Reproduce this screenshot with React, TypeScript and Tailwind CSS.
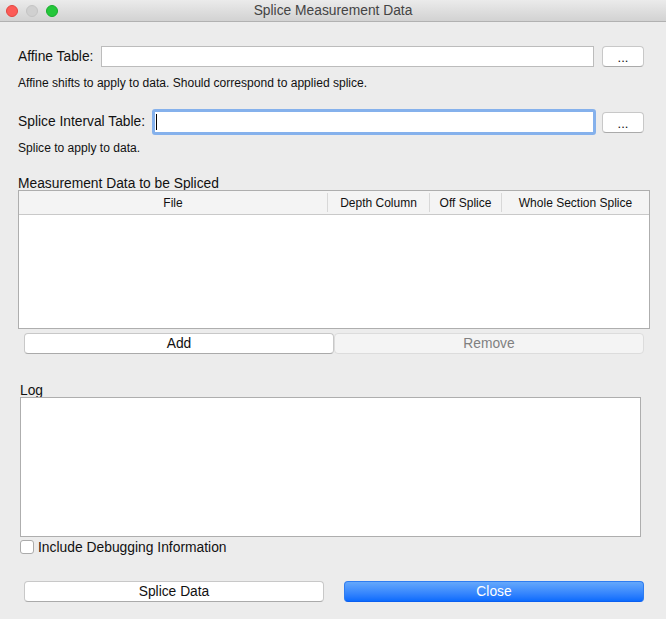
export default function App() {
  const font = { fontFamily: '"Liberation Sans", Arial, sans-serif' };
  return (
    <div style={font} className="flex h-[619px] w-[666px] flex-col overflow-hidden bg-[#ececec] text-[13.8px] text-[#111]">
      <header className="relative flex h-[22px] shrink-0 items-center justify-center border-b border-[#b1b1b1] bg-gradient-to-b from-[#ebebeb] to-[#d2d2d2]">
        <div className="absolute left-[6px] top-[5px] flex gap-[8px]">
          <span className="h-[12px] w-[12px] rounded-full border border-[#e2463f] bg-[#fc5b57]" />
          <span className="h-[12px] w-[12px] rounded-full border border-[#c4c4c4] bg-[#d0d0d0]" />
          <span className="h-[12px] w-[12px] rounded-full border border-[#17ad2d] bg-[#25c73b]" />
        </div>
        <span className="pt-[2px] text-[13.8px] text-[#444]">Splice Measurement Data</span>
      </header>

      <main className="flex flex-1 flex-col">
        <div className="ml-[18px] mt-[24px] flex h-[21px] items-center">
          <label className="w-[83px] pt-[1px]">Affine Table:</label>
          <div className="h-[21px] w-[493px] border border-[#bcbcbc] bg-white" />
          <button className="ml-[8px] flex h-[21px] w-[42px] items-center justify-center rounded-[4px] border border-[#c8c8c8] border-b-[#aaa] bg-white pt-[3px] text-[13px]">...</button>
        </div>
        <p className="ml-[18px] mt-[9px] h-[14px] text-[12.07px] leading-[14px]">Affine shifts to apply to data. Should correspond to applied splice.</p>

        <div className="ml-[18px] mt-[19px] flex h-[26px] items-center">
          <label className="w-[134px] pt-[1px]">Splice Interval Table:</label>
          <div className="flex h-[26px] w-[444px] items-center rounded-[3px] border-[3px] border-[#85b1ec] bg-white pl-[1px]">
            <span className="h-[16px] w-[1px] bg-black" />
          </div>
          <button className="ml-[6px] flex h-[21px] w-[42px] items-center justify-center rounded-[4px] border border-[#c8c8c8] border-b-[#aaa] bg-white pt-[3px] text-[13px]">...</button>
        </div>
        <p className="ml-[18px] mt-[6px] h-[14px] text-[12.07px] leading-[14px]">Splice to apply to data.</p>

        <h2 className="ml-[18px] mt-[21px] h-[15px] leading-[15px]">Measurement Data to be Spliced</h2>
        <section className="ml-[18px] mt-[-1px] flex h-[139px] w-[632px] flex-col border border-[#aeaeae] bg-white">
          <div className="flex h-[24px] items-center border-b border-[#c9c9c9] bg-[#f4f4f4] text-[12px]">
            <div className="w-[308px] text-center">File</div>
            <div className="h-[19px] w-[102px] border-l border-[#d8d8d8] text-center leading-[21px]">Depth Column</div>
            <div className="h-[19px] w-[72px] border-l border-[#d8d8d8] text-center leading-[21px]">Off Splice</div>
            <div className="h-[19px] flex-1 border-l border-[#d8d8d8] text-center leading-[21px]">Whole Section Splice</div>
          </div>
        </section>

        <div className="ml-[24px] mt-[4px] flex h-[21px] w-[620px]">
          <button className="h-[21px] w-[310px] rounded-[4px] border border-[#c8c8c8] border-b-[#aaa] bg-white">Add</button>
          <button className="h-[21px] w-[310px] rounded-[4px] border border-[#dcdcdc] bg-[#f4f4f4] text-[#808080]">Remove</button>
        </div>

        <h2 className="ml-[20px] mt-[29px] h-[15px] leading-[15px]">Log</h2>
        <div className="ml-[20px] mt-[-1px] h-[140px] w-[621px] border border-[#aeaeae] bg-white" />

        <label className="ml-[20px] mt-[3px] flex h-[14px] items-center">
          <span className="h-[14px] w-[14px] rounded-[3px] border border-[#ababab] bg-white" />
          <span className="ml-[4px] pt-[1px] text-[13.85px]">Include Debugging Information</span>
        </label>

        <div className="ml-[24px] mt-[27px] flex w-[620px] justify-between">
          <button className="h-[21px] w-[300px] rounded-[4px] border border-[#c8c8c8] border-b-[#aaa] bg-white">Splice Data</button>
          <button className="h-[21px] w-[300px] rounded-[4px] border border-[#2f7df0] border-b-[#0a5ff0] bg-gradient-to-b from-[#65a8fb] to-[#0a6bfd] text-white">Close</button>
        </div>
      </main>
    </div>
  );
}
